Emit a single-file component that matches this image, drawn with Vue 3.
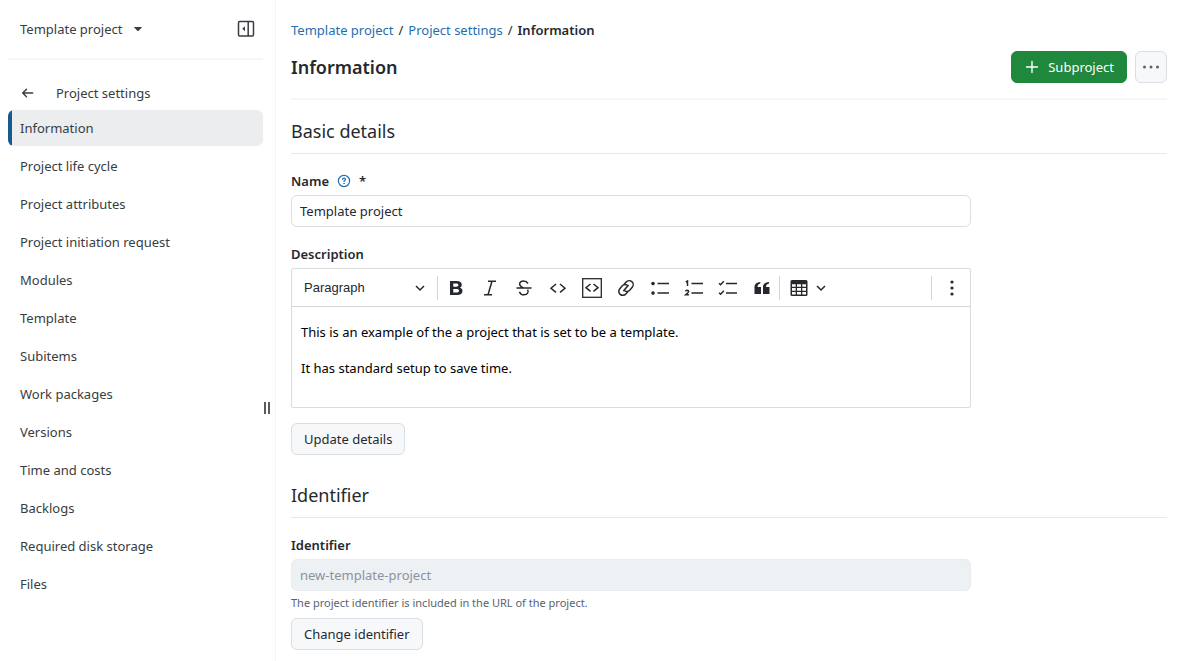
<script setup>
import { ref } from 'vue'

const items = [
  'Information',
  'Project life cycle',
  'Project attributes',
  'Project initiation request',
  'Modules',
  'Template',
  'Subitems',
  'Work packages',
  'Versions',
  'Time and costs',
  'Backlogs',
  'Required disk storage',
  'Files',
]
const active = ref('Information')
const name = ref('Template project')
const identifier = ref('new-template-project')
const description = ref(
  'This is an example of the a project that is set to be a template.\n\nIt has standard setup to save time.'
)
</script>

<template>
  <div class="page">
    <aside class="sidebar">
      <div class="side-head">
        <button class="project-switch" type="button">
          Template project
          <svg width="16" height="16" viewBox="0 0 16 16" aria-hidden="true"><path d="M4.400 6h7.200q.6 0 .2.5L8.400 9.900q-.4.4-.8 0L4.200 6.500q-.4-.5.2-.5z" fill="currentColor" /></svg>
        </button>
        <button class="plain" type="button" aria-label="Collapse sidebar">
          <svg width="18" height="18" viewBox="0 0 18 18" fill="none" stroke="currentColor" stroke-width="1.500" aria-hidden="true">
            <rect x="1.500" y="1.500" width="15" height="14.500" rx="1.200" />
            <path d="M11.200 1.500v14.500" />
            <path d="M8 6.200v5L5.200 8.700z" fill="currentColor" stroke="none" />
          </svg>
        </button>
      </div>
      <div class="back-row">
        <button class="plain" type="button" aria-label="Back">
          <svg width="16" height="16" viewBox="0 0 16 16" fill="none" stroke="currentColor" stroke-width="1.400" stroke-linecap="round" stroke-linejoin="round" aria-hidden="true"><path d="M12.700 8H3M6.500 4.200L2.700 8L6.500 11.800" /></svg>
        </button>
        <span>Project settings</span>
      </div>
      <nav class="menu" aria-label="Project settings">
        <a
          v-for="item in items"
          :key="item"
          href="#"
          :class="{ active: item === active }"
          @click.prevent="active = item"
        >{{ item }}</a>
      </nav>
      <div class="grip" aria-hidden="true"></div>
    </aside>

    <main class="main">
      <nav class="crumbs" aria-label="Breadcrumb">
        <a href="#">Template project</a><span>/</span><a href="#">Project settings</a><span>/</span><strong>Information</strong>
      </nav>

      <header class="title-row">
        <h1>Information</h1>
        <div class="actions">
          <button class="btn primary" type="button">
            <svg width="16" height="16" viewBox="0 0 16 16" fill="none" stroke="currentColor" stroke-width="1.400" stroke-linecap="round" aria-hidden="true"><path d="M8 2.500v11M2.500 8h11" /></svg>
            Subproject
          </button>
          <button class="btn more" type="button" aria-label="More">
            <svg width="18" height="16" viewBox="0 0 18 16" fill="currentColor" aria-hidden="true"><circle cx="2.500" cy="8" r="1.500" /><circle cx="9" cy="8" r="1.500" /><circle cx="15.500" cy="8" r="1.500" /></svg>
          </button>
        </div>
      </header>

      <form @submit.prevent>
        <h2>Basic details</h2>
        <div class="label-row">
          <label for="name">Name</label>
          <button class="plain help" type="button" aria-label="Help">
            <svg width="14" height="14" viewBox="0 0 14 14" fill="none" stroke="currentColor" stroke-width="1.200" stroke-linecap="round" aria-hidden="true"><circle cx="7" cy="7" r="5.600" /><path d="M5.600 5.500C5.700 4.600 6.300 4.200 7 4.200C7.900 4.200 8.400 4.800 8.400 5.400C8.400 6.400 7 6.500 7 7.600" /><circle cx="7" cy="9.600" r=".3" fill="currentColor" stroke-width=".8" /></svg>
          </button>
          <span>*</span>
        </div>
        <input id="name" v-model="name" class="field" type="text" />

        <div class="label-row"><label for="description">Description</label></div>
        <div class="editor">
          <div class="toolbar">
            <div class="style-select">
              <select aria-label="Text style"><option>Paragraph</option><option>Heading 1</option><option>Heading 2</option></select>
              <svg class="chev" viewBox="0 0 10 10"><path d="M1 3l4 4 4-4" /></svg>
            </div>
            <i class="sep"></i>
            <button type="button" aria-label="Bold"><svg viewBox="0 0 20 20"><path fill="currentColor" fill-rule="evenodd" d="M4 3h6.600c3.400 0 5.200 1.400 5.200 3.800 0 1.500-.7 2.400-1.900 2.900 1.700.4 2.600 1.600 2.600 3.200 0 2.600-2 4.100-5.300 4.100H4zM7.300 5.400v3.300h2.800c1.600 0 2.300-.5 2.300-1.700 0-1.100-.7-1.600-2.200-1.600zM7.300 11v3.600h3.200c1.700 0 2.500-.6 2.500-1.800S12.200 11 10.500 11z" /></svg></button>
            <button type="button" aria-label="Italic"><svg viewBox="0 0 20 20" class="line"><path d="M8 3.200h8M4 16.800h8M12 3.200l-4 13.600" /></svg></button>
            <button type="button" aria-label="Strikethrough"><svg viewBox="0 0 20 20" class="line"><path d="M2.500 10h15M14 5.500C12.800 3.500 10.800 3 9.500 3C7.200 3 5.600 4.200 5.600 6.100C5.600 8 7 9 9.500 10M13.600 11.600C15 14 13.600 16.800 10 16.800C7.600 16.800 6 15.600 5.500 13.700" /></svg></button>
            <button type="button" aria-label="Inline code"><svg viewBox="0 0 20 20" class="line"><path d="M8 6l-5 4.200L8 14.400M12 6l5 4.200-5 4.200" /></svg></button>
            <button type="button" aria-label="Code block"><svg viewBox="0 0 20 20" class="line"><rect x=".7" y=".7" width="18.600" height="18.600" stroke-width="1.300" /><path d="M8.500 6L4 9.700l4.500 3.700M11.500 6L16 9.700l-4.500 3.700" /></svg></button>
            <button type="button" aria-label="Link"><svg viewBox="0 0 20 20" class="line round"><path d="M8.200 6.300l2-2.300a4 4 0 0 1 6 5.300l-2.300 2.700a4 4 0 0 1-5 .8M11.800 13.700l-2 2.300a4 4 0 0 1-6-5.300l2.300-2.700a4 4 0 0 1 5-.8M12.200 7.600l-4.400 5" /></svg></button>
            <button type="button" aria-label="Bulleted list"><svg viewBox="0 0 20 20" class="line"><path d="M7.500 5.600H19M7.500 15.100H19" /><g fill="currentColor" stroke="none"><circle cx="3" cy="5.600" r="1.800" /><circle cx="3" cy="15.100" r="1.800" /></g></svg></button>
            <button type="button" aria-label="Numbered list"><svg viewBox="0 0 20 20" class="line"><path d="M7.500 5.600H19M7.500 15.100H19M1.800 4l1.700-1v5M1.500 13.400q.2-1.200 1.600-1.200 1.500 0 1.500 1.200 0 .8-3 3.400h3.300" /></svg></button>
            <button type="button" aria-label="To-do list"><svg viewBox="0 0 20 20" class="line"><path d="M8 5.600H19M8 15.100H19M1 5.300l1.600 1.500L5.800 3.200M1 14.800l1.600 1.500 3.200-3.600" /></svg></button>
            <button type="button" aria-label="Block quote"><svg viewBox="0 0 20 20" fill="currentColor"><path d="M2.500 10.500C2 6.500 4.300 4.300 8.300 4v1.500C6.500 5.900 5.500 7 5.500 9H9v7H2.500zM11 10.500C10.500 6.500 12.800 4.300 17 4v1.500C14.900 5.900 14 7 14 9h3.500v7H11z" /></svg></button>
            <i class="sep"></i>
            <button class="wide" type="button" aria-label="Insert table">
              <svg viewBox="0 0 20 20"><path fill="currentColor" fill-rule="evenodd" d="M3 2h14q1.500 0 1.500 1.500v13q0 1.500-1.500 1.500H3q-1.500 0-1.500-1.500v-13Q1.500 2 3 2zM3 6.200v2.600h3.700V6.200zM8 6.200v2.600h4V6.200zM13.300 6.200v2.600H17V6.200zM3 10.100v2.600h3.700v-2.600zM8 10.100v2.600h4v-2.600zM13.300 10.100v2.600H17v-2.600zM3 14v2.600h3.700V14zM8 14v2.600h4V14zM13.300 14v2.600H17V14z" /></svg>
              <svg class="chev" viewBox="0 0 10 10"><path d="M1 3l4 4 4-4" /></svg>
            </button>
            <i class="sep end"></i>
            <button class="kebab" type="button" aria-label="More tools"><svg viewBox="0 0 20 20" fill="currentColor"><circle cx="10" cy="4" r="1.600" /><circle cx="10" cy="10" r="1.600" /><circle cx="10" cy="16" r="1.600" /></svg></button>
          </div>
          <textarea id="description" v-model="description"></textarea>
        </div>
        <button class="btn update" type="submit">Update details</button>
      </form>

      <section>
        <h2 class="second">Identifier</h2>
        <div class="label-row"><label for="identifier">Identifier</label></div>
        <input id="identifier" v-model="identifier" class="field" type="text" disabled />
        <p class="caption">The project identifier is included in the URL of the project.</p>
        <button class="btn" type="button">Change identifier</button>
      </section>
    </main>
  </div>
</template>

<style>
body {
  background: #fff;
}
</style>

<style scoped>
* {
  box-sizing: border-box;
}
.page {
  display: flex;
  min-height: 100vh;
  font: 13px/20px "Noto Sans", "Open Sans", sans-serif;
  color: #25292e;
}
button,
input,
select,
textarea {
  font: inherit;
  color: inherit;
  margin: 0;
}
svg {
  display: block;
  flex: none;
}
.plain,
.project-switch {
  display: flex;
  align-items: center;
  padding: 0;
  border: 0;
  background: none;
}
.project-switch {
  gap: 8px;
}
.sidebar {
  position: relative;
  flex: none;
  width: 276px;
  padding: 0 12px 0 8px;
  border-right: 1px solid #f3f4f6;
  color: #383d42;
}
.side-head {
  display: flex;
  align-items: center;
  justify-content: space-between;
  height: 60px;
  padding: 0 8px 0 12px;
  border-bottom: 2px solid #f5f6f7;
}
.back-row {
  display: flex;
  align-items: center;
  gap: 20px;
  height: 34px;
  margin-top: 16px;
  padding-left: 12px;
}
.menu {
  display: flex;
  flex-direction: column;
  gap: 2px;
}
.menu a {
  height: 36px;
  padding: 0 12px;
  border-radius: 6px;
  line-height: 36px;
  color: inherit;
  text-decoration: none;
}
.menu a.active {
  background: linear-gradient(to right, #175a8e 4px, #ecedef 4px);
}
.grip {
  position: absolute;
  right: 5px;
  top: 402px;
  width: 6px;
  height: 12px;
  border: solid #5b5b5b;
  border-width: 0 2px;
}
.main {
  flex: 1;
  min-width: 0;
  padding: 20px 15px 10px;
}
.crumbs {
  display: flex;
  gap: 5px;
}
.crumbs a {
  color: #1f6fb0;
  text-decoration: none;
}
.crumbs strong,
.label-row {
  font-weight: 600;
}
.title-row {
  display: flex;
  align-items: center;
  justify-content: space-between;
  margin-top: 11px;
  padding-bottom: 15px;
  border-bottom: 2px solid #f5f6f7;
}
h1,
h2,
p {
  margin: 0;
}
h1 {
  font-size: 18px;
  line-height: 32px;
  font-weight: 600;
}
h2 {
  margin-top: 16px;
  padding-bottom: 7px;
  border-bottom: 1px solid #e6e8ea;
  font-size: 18px;
  line-height: 30px;
  font-weight: 400;
}
h2.second {
  margin-top: 25px;
}
.actions {
  display: flex;
  gap: 8px;
}
.btn {
  display: flex;
  align-items: center;
  height: 32px;
  padding: 0 12px;
  border: 1px solid #d8dee4;
  border-radius: 6px;
  background: #f6f8fa;
}
.btn.primary {
  gap: 8px;
  border-color: #1f883d;
  background: #1f883d;
  color: #fff;
}
.btn.more {
  justify-content: center;
  width: 32px;
  padding: 0;
  color: #59636e;
}
.label-row {
  display: flex;
  align-items: center;
  gap: 8px;
  margin: 17px 0 4px;
}
.help {
  color: #1f6fb0;
}
.field {
  display: block;
  width: 100%;
  max-width: 680px;
  height: 32px;
  padding: 0 8px;
  border: 1px solid #d8dee4;
  border-radius: 6px;
  background: #fff;
}
.field:disabled {
  border-color: #e8ecf0;
  background: #eef1f4;
  color: #8a939e;
}
.editor {
  max-width: 680px;
  border: 1px solid #dcdcdc;
  border-radius: 2px;
}
.toolbar {
  display: flex;
  align-items: center;
  height: 38px;
  border-bottom: 1px solid #d5d5d5;
}
.toolbar button {
  display: flex;
  align-items: center;
  justify-content: center;
  width: 34px;
  height: 32px;
  padding: 0;
  border: 0;
  background: none;
}
.toolbar button svg {
  width: 20px;
  height: 20px;
}
.line {
  fill: none;
  stroke: currentColor;
  stroke-width: 1.500;
}
.round {
  stroke-linecap: round;
}
.style-select {
  display: flex;
  align-items: center;
  width: 145px;
}
.style-select select {
  width: 100%;
  height: 32px;
  padding: 0 28px 0 12px;
  border: 0;
  appearance: none;
  background: none;
  font: 13px "Liberation Sans", sans-serif;
}
.style-select .chev {
  margin-left: -22px;
  margin-right: 12px;
  pointer-events: none;
}
.chev,
.toolbar button .chev {
  width: 10px;
  height: 10px;
  fill: none;
  stroke: currentColor;
  stroke-width: 1.500;
}
.sep {
  width: 1px;
  height: 24px;
  margin-right: 1px;
  background: #d5d5d5;
}
.toolbar .wide {
  gap: 7px;
  width: 52px;
}
.sep.end {
  margin-left: auto;
}
.toolbar .kebab {
  width: 37px;
}
textarea {
  display: block;
  width: 100%;
  height: 100px;
  padding: 16px 9px;
  border: 0;
  outline: 0;
  resize: none;
  background: none;
  line-height: 18px;
  color: #000;
}
.update {
  margin-top: 15px;
}
.caption {
  margin: 4px 0 7px;
  font-size: 11px;
  line-height: 16px;
  color: #59636e;
}
</style>
